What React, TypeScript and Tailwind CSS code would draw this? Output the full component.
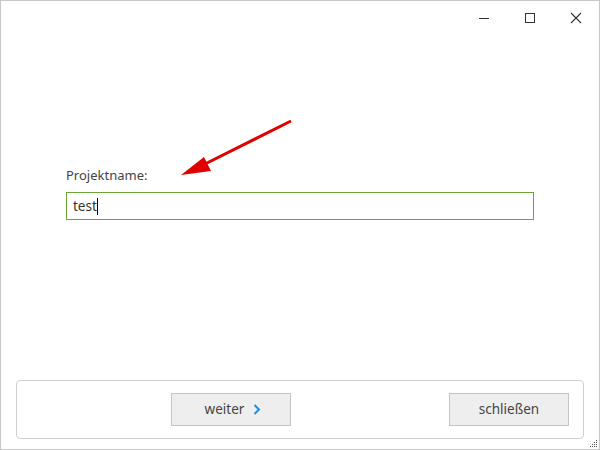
import React from "react";

export default function App() {
  return (
    <div
      className="relative w-[600px] h-[450px] bg-white border border-[#c8c8c8] flex flex-col text-[#333]"
      style={{ fontFamily: '"Noto Sans", "Open Sans", sans-serif' }}
    >
      {/* title bar */}
      <div className="h-[34px] flex justify-end shrink-0">
        <div className="w-[46px] h-[34px] flex items-center justify-center">
          <svg width="12" height="12" viewBox="0 0 12 12">
            <line x1="1" y1="6.5" x2="11" y2="6.5" stroke="#333" strokeWidth="1" />
          </svg>
        </div>
        <div className="w-[46px] h-[34px] flex items-center justify-center">
          <svg width="12" height="12" viewBox="0 0 12 12">
            <rect x="1.5" y="1.5" width="9" height="9" fill="none" stroke="#333" strokeWidth="1" />
          </svg>
        </div>
        <div className="w-[46px] h-[34px] flex items-center justify-center">
          <svg width="12" height="12" viewBox="0 0 12 12">
            <path d="M1 1 L11 11 M11 1 L1 11" stroke="#333" strokeWidth="1.1" />
          </svg>
        </div>
      </div>

      {/* content */}
      <div className="flex-1 flex flex-col pl-[65px] pt-[131px]">
        <div className="text-[13px] leading-[18px] text-[#444]">Projektname:</div>
        <div className="mt-[8px] w-[468px] h-[28px] border border-[#6aa638] flex items-center pl-[6px] text-[13.5px] text-[#333]">
          <span>test</span>
          <span className="inline-block w-[1px] h-[17px] bg-black" />
        </div>
      </div>

      {/* bottom panel */}
      <div className="mx-[15px] mb-[10px] h-[59px] border border-[#cfcfcf] rounded-[4px] flex items-center shrink-0">
        <button className="ml-[154px] w-[120px] h-[33px] bg-[#eeeeee] border border-[#c4c4c4] flex items-center justify-center gap-[9px] pl-[4px] text-[13.5px] text-[#444]">
          <span>weiter</span>
          <svg width="8" height="11" viewBox="0 0 8 11">
            <path d="M1.5 1 L6 5.5 L1.5 10" fill="none" stroke="#1c8fe3" strokeWidth="2" />
          </svg>
        </button>
        <button className="ml-auto mr-[14px] w-[120px] h-[33px] bg-[#eeeeee] border border-[#c4c4c4] flex items-center justify-center text-[13.5px] text-[#444]">
          schließen
        </button>
      </div>

      {/* arrow annotation */}
      <svg className="absolute left-0 top-0 pointer-events-none" width="600" height="450">
        <line x1="290" y1="120" x2="200" y2="165" stroke="#e00000" strokeWidth="3" />
        <polygon points="180,174 203,156 210,170" fill="#e00000" />
      </svg>

      {/* resize grip */}
      <svg className="absolute right-[1px] bottom-[1px]" width="9" height="9" viewBox="0 0 9 9">
        <rect x="7" y="1" width="1" height="1" fill="#555" />
        <rect x="5" y="3" width="1" height="1" fill="#555" />
        <rect x="7" y="3" width="1" height="1" fill="#555" />
        <rect x="3" y="5" width="1" height="1" fill="#555" />
        <rect x="5" y="5" width="1" height="1" fill="#555" />
        <rect x="7" y="5" width="1" height="1" fill="#555" />
        <rect x="1" y="7" width="1" height="1" fill="#555" />
        <rect x="3" y="7" width="1" height="1" fill="#555" />
        <rect x="5" y="7" width="1" height="1" fill="#555" />
        <rect x="7" y="7" width="1" height="1" fill="#555" />
      </svg>
    </div>
  );
}
